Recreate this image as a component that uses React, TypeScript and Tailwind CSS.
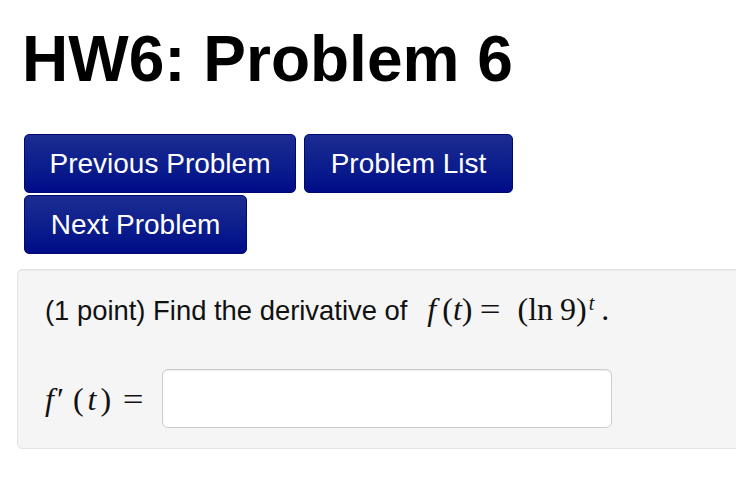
export default function App() {
  const math = { fontFamily: '"Liberation Serif", "Times New Roman", serif' };
  const btn =
    "flex h-[59px] items-center justify-center rounded-[5px] border border-[#00096e] bg-gradient-to-b from-[#1c2c92] to-[#010a88] text-[28px] text-white";
  return (
    <div className="h-[477px] w-[736px] overflow-hidden bg-white" style={{ fontFamily: '"Liberation Sans", Arial, sans-serif' }}>
      <h1 className="ml-[22px] pt-[26px] text-[64px] font-bold leading-[66px] text-black">HW6: Problem 6</h1>

      <div className="ml-[24px] mt-[42px] flex flex-col gap-[2px]">
        <div className="flex gap-2">
          <button className={btn + " w-[272px]"}>Previous Problem</button>
          <button className={btn + " w-[209px]"}>Problem List</button>
        </div>
        <div className="flex">
          <button className={btn + " w-[223px]"}>Next Problem</button>
        </div>
      </div>

      <div className="ml-[17px] mt-[15px] h-[180px] w-[740px] rounded-[5px] border border-[#e3e3e3] bg-[#f5f5f5] pl-[27px] pt-[19px] shadow-[inset_0_1px_1px_rgba(0,0,0,0.05)]">
        <p className="flex items-baseline text-[27.4px] leading-[40px] text-[#111]">
          <span>(1 point) Find the derivative of</span>
          <span style={math} className="ml-[20px] flex items-baseline text-[32px]">
            <i>f</i>
            <span className="ml-[6px]">(</span>
            <i>t</i>
            <span>)</span>
            <span className="ml-[9px] mr-[18px] inline-block scale-x-[1.15]">=</span>
            <span>(ln</span>
            <span className="ml-[7px]">9)</span>
            <sup className="ml-[2px] text-[20px]"><i>t</i></sup>
            <span className="ml-[7px]">.</span>
          </span>
        </p>
        <div className="mt-[38px] flex items-center">
          <span style={math} className="flex items-baseline text-[32px] text-[#111]">
            <i>f</i>
            <span className="ml-[3px]">′</span>
            <span className="ml-[9px]">(</span>
            <i className="ml-[4px]">t</i>
            <span className="ml-[4px]">)</span>
            <span className="ml-[13px] inline-block scale-x-[1.15]">=</span>
          </span>
          <div className="ml-[20px] h-[59px] w-[450px] rounded-[6px] border border-[#cccccc] bg-white shadow-[inset_0_1px_1px_rgba(0,0,0,0.075)]" />
        </div>
      </div>
    </div>
  );
}
